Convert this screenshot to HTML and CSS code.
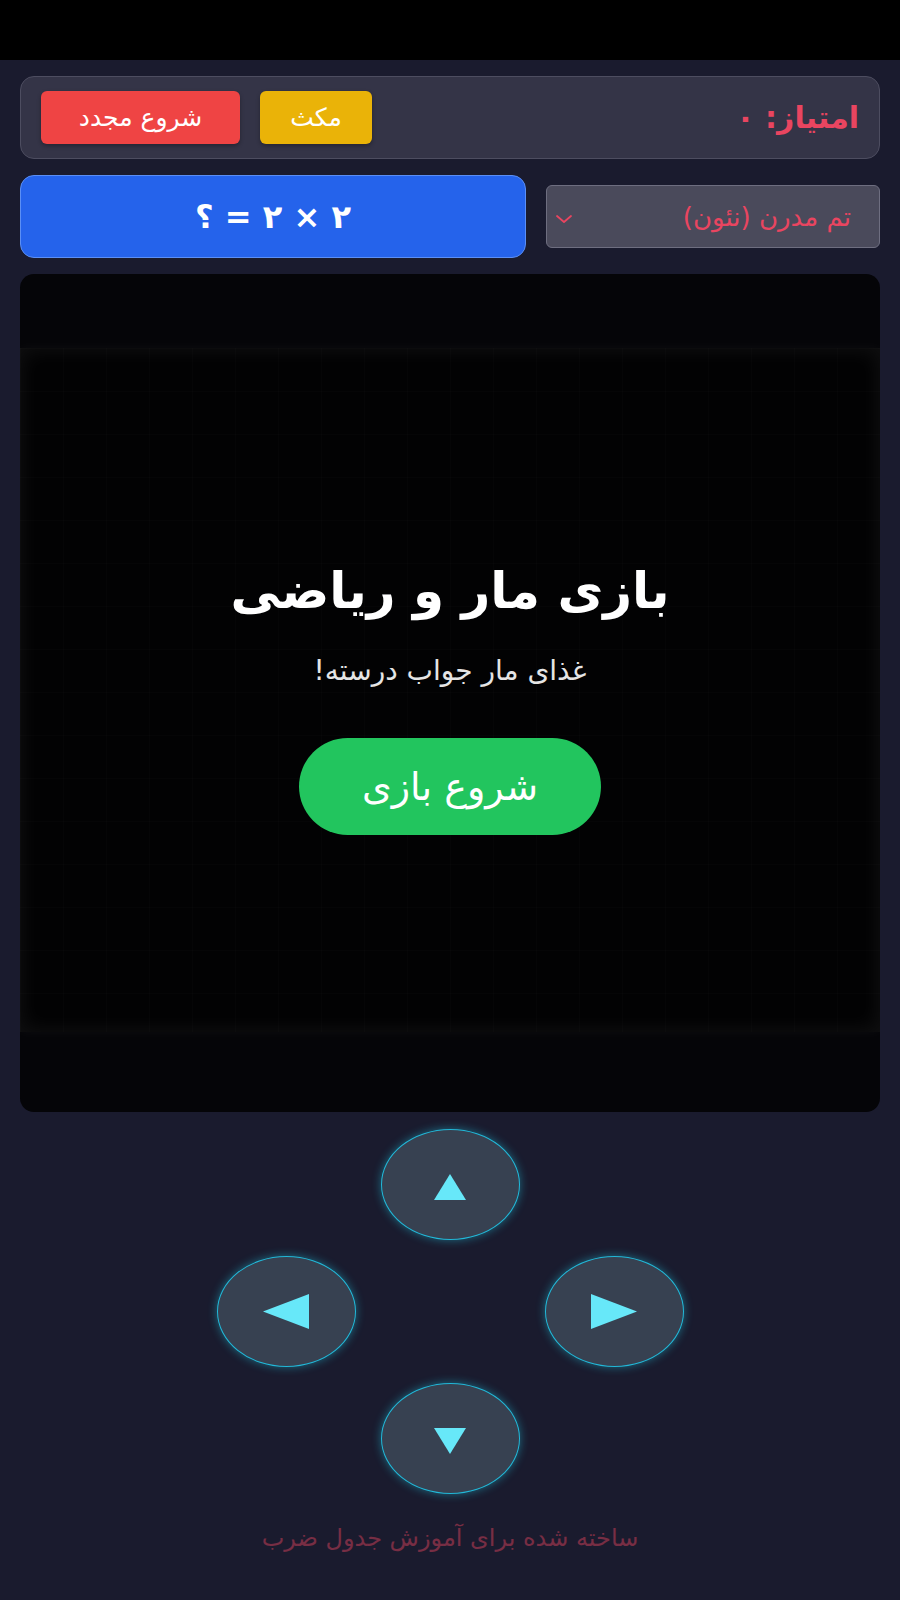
FILE: index.html
```html
<!DOCTYPE html>
<html lang="fa" dir="rtl">
<head>
    <meta charset="UTF-8">
    <meta name="viewport" content="width=device-width, initial-scale=1.0">
    <title>بازی مار و ریاضی</title>
    <link rel="stylesheet" href="styles.css">
</head>
<body>
    <div class="status-bar"></div>
    <div class="container">
        <div class="top-bar">
            <span class="score">امتیاز: <span id="score">۰</span></span>
            <div class="actions">
                <button class="btn btn-pause">مکث</button>
                <button class="btn btn-restart">شروع مجدد</button>
            </div>
        </div>

        <div class="second-row">
            <div class="theme-select">
                <span>تم مدرن (نئون)</span>
                <svg class="chevron" width="18" height="10" viewBox="0 0 18 10"><path d="M2 2 L9 8 L16 2" fill="none" stroke="#e94560" stroke-width="1.8" stroke-linecap="round" stroke-linejoin="round"/></svg>
            </div>
            <div class="question">۲ × ۲ = ؟</div>
        </div>

        <div class="board">
            <div class="field"></div>
            <div class="overlay">
                <h1>بازی مار و ریاضی</h1>
                <p>غذای مار جواب درسته!</p>
                <button class="btn-start">شروع بازی</button>
            </div>
        </div>

        <div class="dpad">
            <button class="pad pad-up"><svg width="32" height="26" viewBox="0 0 32 26"><polygon points="16,0 32,26 0,26"/></svg></button>
            <button class="pad pad-left"><svg width="46" height="35" viewBox="0 0 46 35"><polygon points="0,17.5 46,0 46,35"/></svg></button>
            <button class="pad pad-right"><svg width="46" height="35" viewBox="0 0 46 35"><polygon points="46,17.5 0,0 0,35"/></svg></button>
            <button class="pad pad-down"><svg width="32" height="26" viewBox="0 0 32 26"><polygon points="0,0 32,0 16,26"/></svg></button>
        </div>

        <p class="footer">ساخته شده برای آموزش جدول ضرب</p>
    </div>
</body>
</html>
```

FILE: styles.css
```css
* {
    box-sizing: border-box;
}

body {
    font-family: "DejaVu Sans", sans-serif;
    background-color: #1a1b2e;
    margin: 0;
    padding: 0;
}

.status-bar {
    height: 60px;
    background-color: #000;
}

.container {
    padding: 16px 20px 0;
    display: flex;
    flex-direction: column;
    gap: 16px;
}

.top-bar {
    display: flex;
    justify-content: space-between;
    align-items: center;
    background-color: #343447;
    border: 1px solid #4d4d60;
    border-radius: 14px;
    padding: 14px 20px;
}

.score {
    color: #e94560;
    font-size: 30px;
    font-weight: bold;
}

.actions {
    display: flex;
    gap: 20px;
}

.btn {
    height: 53px;
    border: none;
    border-radius: 6px;
    color: white;
    font-family: inherit;
    font-size: 25px;
    padding: 0;
    box-shadow: 0 2px 4px rgba(0, 0, 0, 0.3);
}

.btn-pause {
    width: 112px;
    background-color: #eab308;
}

.btn-restart {
    width: 199px;
    background-color: #ef4444;
}

.second-row {
    display: flex;
    align-items: center;
    gap: 20px;
}

.theme-select {
    width: 334px;
    height: 63px;
    display: flex;
    align-items: center;
    justify-content: space-between;
    padding: 0 28px 0 8px;
    background-color: #4a4a5b;
    border: 1px solid #6e6e80;
    border-radius: 6px;
    color: #e94560;
    font-size: 26px;
}

.chevron {
    margin-top: 4px;
}

.question {
    flex: 1;
    height: 83px;
    display: flex;
    align-items: center;
    justify-content: center;
    background-color: #2563eb;
    border: 1px solid #5b8ff5;
    border-radius: 14px;
    color: white;
    font-size: 32px;
    font-weight: bold;
}

.board {
    position: relative;
    height: 838px;
    background-color: #050508;
    border-radius: 14px;
    display: flex;
    align-items: center;
    overflow: hidden;
}

.field {
    width: 100%;
    height: 684px;
    margin-top: -6px;
    background-color: #020203;
    background-image:
        linear-gradient(rgba(255, 255, 255, 0.012) 1px, transparent 1px),
        linear-gradient(90deg, rgba(255, 255, 255, 0.012) 1px, transparent 1px);
    background-size: 43px 43px;
    box-shadow: 0 0 12px rgba(255, 255, 255, 0.04), inset 0 0 20px 3px rgba(255, 255, 255, 0.06);
}

.overlay {
    position: absolute;
    inset: 0;
    display: flex;
    flex-direction: column;
    align-items: center;
    justify-content: center;
    color: white;
    padding-top: 11px;
}

.overlay h1 {
    font-size: 50px;
    line-height: 58px;
    margin: 0 0 34px;
}

.overlay p {
    font-size: 28px;
    line-height: 34px;
    color: #e5e5e5;
    margin: 0 0 50px;
}

.btn-start {
    width: 302px;
    height: 97px;
    border: none;
    border-radius: 50px;
    background-color: #22c55e;
    color: white;
    font-family: inherit;
    font-size: 38px;
}

.dpad {
    direction: ltr;
    display: grid;
    grid-template-columns: repeat(3, 139px);
    grid-template-rows: repeat(3, 111px);
    column-gap: 25px;
    row-gap: 16px;
    justify-content: center;
    margin-top: 1px;
}

.pad {
    display: flex;
    align-items: center;
    justify-content: center;
    background-color: #374151;
    border: 1px solid #22b8d8;
    border-radius: 50%;
    box-shadow: 0 0 10px rgba(34, 211, 238, 0.45);
    padding: 0;
}

.pad svg {
    fill: #67e8f9;
}

.pad-up {
    grid-column: 2;
    grid-row: 1;
}

.pad-up svg,
.pad-down svg {
    margin-top: 4px;
}

.pad-left {
    grid-column: 1;
    grid-row: 2;
}

.pad-right {
    grid-column: 3;
    grid-row: 2;
}

.pad-down {
    grid-column: 2;
    grid-row: 3;
}

.footer {
    text-align: center;
    color: #e94560;
    opacity: 0.45;
    font-size: 24px;
    margin: 14px 0 0;
}
```
